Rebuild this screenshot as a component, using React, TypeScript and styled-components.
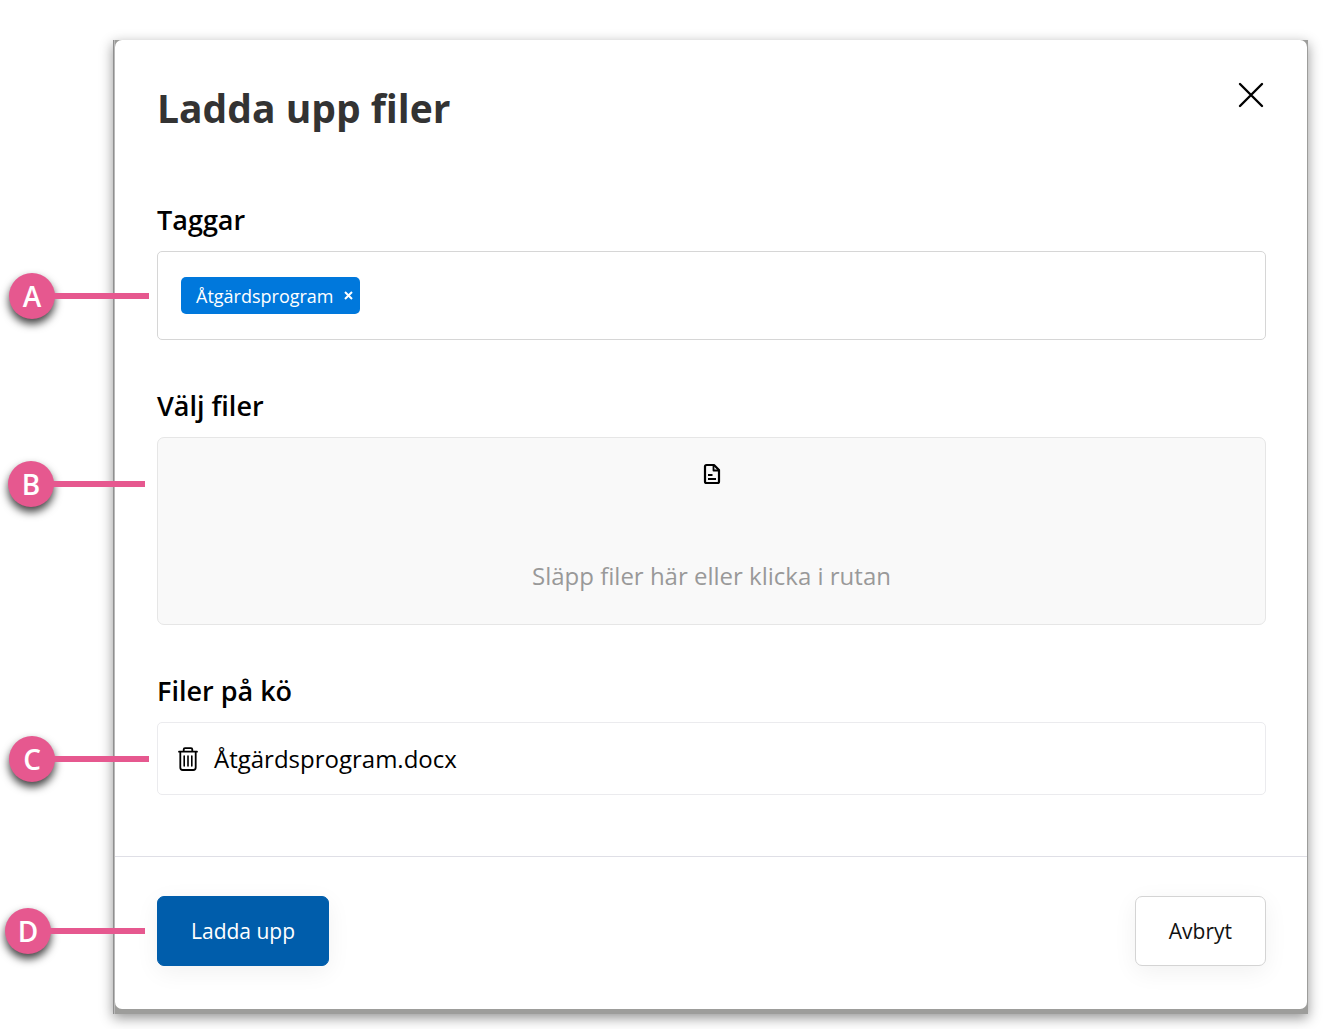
import React, { useState } from "react";
import styled, { createGlobalStyle } from "styled-components";

const GlobalStyle = createGlobalStyle`
  *, *::before, *::after { box-sizing: border-box; }
  body {
    margin: 0;
    background: #fff;
    color: #000;
    font-family: "Open Sans", "Noto Sans", sans-serif;
  }
`;

const Page = styled.div`
  padding: 40px 16px 15px 113px;
`;

const Backdrop = styled.div`
  padding: 0 1px 5px 2px;
  background: linear-gradient(90deg, #8f8f8f 1px, #b9b9b9 1px 2px, #9d9d9b 2px);
  box-shadow: 0 4px 12px rgba(0, 0, 0, 0.42);
`;

const Dialog = styled.section`
  background: #fff;
  border-radius: 7px;
`;

const Header = styled.header`
  display: flex;
  justify-content: space-between;
  align-items: flex-start;
  padding: 40px 41px 0 42px;
`;

const Title = styled.h1`
  margin: 0;
  color: #333;
  font-size: 39px;
  font-weight: 700;
  line-height: 56px;
`;

const IconButton = styled.button`
  display: flex;
  padding: 0;
  border: 0;
  background: none;
  color: #000;
  cursor: pointer;
`;

const CloseButton = styled(IconButton)`
  padding: 2px;
`;

const Body = styled.div`
  display: flex;
  flex-direction: column;
  gap: 49px;
  padding: 67px 41px 61px 42px;
`;

const Field = styled.div`
  display: flex;
  flex-direction: column;
  gap: 14px;
`;

const labelText = `
  margin: 0;
  font-size: 27px;
  font-weight: 600;
  line-height: 34px;
`;

const Label = styled.label`
  ${labelText}
`;

const SubHeading = styled.h2`
  ${labelText}
`;

const Anchor = styled.div`
  position: relative;
`;

const TagBox = styled.div`
  display: flex;
  align-items: center;
  gap: 12px;
  height: 89px;
  padding: 0 23px;
  border: 1px solid #d6d6d6;
  border-radius: 5px;
`;

const Tag = styled.span`
  display: flex;
  align-items: center;
  gap: 10px;
  height: 37px;
  padding: 0 7px 0 15px;
  border-radius: 5px;
  background: #0078dc;
  color: #fff;
  font-size: 18px;
  line-height: 26px;
`;

const TagRemove = styled(IconButton)`
  color: #fff;
`;

const TagInput = styled.input`
  flex: 1;
  min-width: 0;
  border: 0;
  outline: 0;
  background: none;
  font: inherit;
  font-size: 18px;
`;

const DropZone = styled.label`
  display: flex;
  flex-direction: column;
  align-items: center;
  justify-content: space-between;
  height: 188px;
  padding: 25px 24px 31px;
  border: 1px solid #e6e6e6;
  border-radius: 7px;
  background: #f9f9f9;
  color: #999;
  font-size: 24px;
  line-height: 34px;
  cursor: pointer;
`;

const FileInput = styled.input`
  position: absolute;
  width: 1px;
  height: 1px;
  opacity: 0;
`;

const Queue = styled.ul`
  margin: 0;
  padding: 0;
  list-style: none;
  border: 1px solid #ebebee;
  border-radius: 5px;
`;

const QueueItem = styled.li`
  display: flex;
  align-items: center;
  gap: 16px;
  height: 71px;
  padding: 0 20px;
  font-size: 24px;
  line-height: 34px;
`;

const Footer = styled.footer`
  display: flex;
  justify-content: space-between;
  padding: 39px 41px 43px 42px;
  border-top: 1px solid #dfdfe6;
`;

const Button = styled.button<{ $primary?: boolean }>`
  height: 70px;
  padding: 0 33px;
  border: 1px solid ${(p) => (p.$primary ? "#005dab" : "#d4d4d4")};
  border-radius: 7px;
  background: ${(p) => (p.$primary ? "#005dab" : "#fff")};
  color: ${(p) => (p.$primary ? "#fff" : "#111")};
  box-shadow: 0 6px 24px rgba(0, 0, 0, 0.06);
  font-family: inherit;
  font-size: 21px;
  cursor: pointer;
`;

const CalloutRoot = styled.div<{ $gap: number; $width: number }>`
  position: absolute;
  top: 0;
  bottom: 0;
  right: calc(100% + ${(p) => p.$gap}px);
  display: flex;
  align-items: center;
  width: ${(p) => p.$width}px;
`;

const Marker = styled.span`
  display: flex;
  align-items: center;
  justify-content: center;
  width: 46px;
  height: 46px;
  border-radius: 50%;
  background: #e6588f;
  box-shadow: 0 5px 8px rgba(0, 0, 0, 0.75);
  color: #fff;
  font-size: 28px;
  font-weight: 600;
  line-height: 44px;
`;

const Leader = styled.span`
  flex: 1;
  height: 6px;
  margin-left: -1px;
  background: #e6588f;
`;

/* The drop zone is tall, so its callout points at the upper half. */
const UpperHalf = styled.div`
  position: absolute;
  top: 0;
  left: 0;
  width: 100%;
  height: 50%;
`;

function Callout({ letter, gap, width = 140 }: { letter: string; gap: number; width?: number }) {
  return (
    <CalloutRoot $gap={gap} $width={width}>
      <Marker>{letter}</Marker>
      <Leader />
    </CalloutRoot>
  );
}

function CloseIcon() {
  return (
    <svg width="26" height="26" viewBox="0 0 26 26" fill="none" stroke="currentColor" strokeWidth="2.4" strokeLinecap="round">
      <path d="M2 2 24 24M24 2 2 24" />
    </svg>
  );
}

function FileIcon() {
  return (
    <svg width="18" height="22" viewBox="0 0 18 22" fill="none" stroke="#000" strokeWidth="2.2" strokeLinejoin="round">
      <path d="M3.5 2H11L16 7V18.5Q16 20 14.5 20H3.5Q2 20 2 18.5V3.5Q2 2 3.5 2Z" />
      <path d="M10.5 2V7.5H16" strokeWidth="1.8" />
      <path d="M5 12H9.5M5 16H13" strokeWidth="2" />
    </svg>
  );
}

function TrashIcon() {
  return (
    <svg width="20" height="24" viewBox="0 0 20 24" fill="none" stroke="currentColor" strokeWidth="1.8" strokeLinecap="round" strokeLinejoin="round">
      <path d="M1 4.7H19M5.7 4.5V2.5Q5.7 1.2 7 1.2H13Q14.3 1.2 14.3 2.5V4.5" />
      <path d="M2.3 5V20.5Q2.3 23 4.8 23H15.2Q17.7 23 17.7 20.5V5" />
      <path d="M6.2 9V19M10 9V19M13.8 9V19" strokeWidth="1.6" />
    </svg>
  );
}

function RemoveIcon() {
  return (
    <svg width="9" height="9" viewBox="0 0 9 9" fill="none" stroke="currentColor" strokeWidth="2">
      <path d="M1 1 8 8M8 1 1 8" />
    </svg>
  );
}

export default function App() {
  const [tags, setTags] = useState(["Åtgärdsprogram"]);
  const [files, setFiles] = useState(["Åtgärdsprogram.docx"]);

  return (
    <>
      <GlobalStyle />
      <Page>
        <Backdrop>
          <Dialog role="dialog" aria-labelledby="dialog-title">
            <Header>
              <Title id="dialog-title">Ladda upp filer</Title>
              <CloseButton type="button" aria-label="Stäng">
                <CloseIcon />
              </CloseButton>
            </Header>
            <Body>
              <Field>
                <Label htmlFor="tags">Taggar</Label>
                <Anchor>
                  <TagBox>
                    {tags.map((tag) => (
                      <Tag key={tag}>
                        {tag}
                        <TagRemove type="button" aria-label="Ta bort tagg" onClick={() => setTags(tags.filter((t) => t !== tag))}>
                          <RemoveIcon />
                        </TagRemove>
                      </Tag>
                    ))}
                    <TagInput id="tags" type="text" />
                  </TagBox>
                  <Callout letter="A" gap={8} />
                </Anchor>
              </Field>
              <Field>
                <Label htmlFor="files">Välj filer</Label>
                <Anchor>
                  <DropZone>
                    <FileIcon />
                    Släpp filer här eller klicka i rutan
                    <FileInput
                      id="files"
                      type="file"
                      multiple
                      onChange={(e) => setFiles([...files, ...Array.from(e.target.files ?? []).map((f) => f.name)])}
                    />
                  </DropZone>
                  <UpperHalf>
                    <Callout letter="B" gap={12} width={137} />
                  </UpperHalf>
                </Anchor>
              </Field>
              <Field>
                <SubHeading>Filer på kö</SubHeading>
                <Anchor>
                  <Queue>
                    {files.map((file) => (
                      <QueueItem key={file}>
                        <IconButton type="button" aria-label="Ta bort fil" onClick={() => setFiles(files.filter((f) => f !== file))}>
                          <TrashIcon />
                        </IconButton>
                        {file}
                      </QueueItem>
                    ))}
                  </Queue>
                  <Callout letter="C" gap={8} />
                </Anchor>
              </Field>
            </Body>
            <Footer>
              <Anchor>
                <Button type="button" $primary>Ladda upp</Button>
                <Callout letter="D" gap={12} />
              </Anchor>
              <Button type="button">Avbryt</Button>
            </Footer>
          </Dialog>
        </Backdrop>
      </Page>
    </>
  );
}
